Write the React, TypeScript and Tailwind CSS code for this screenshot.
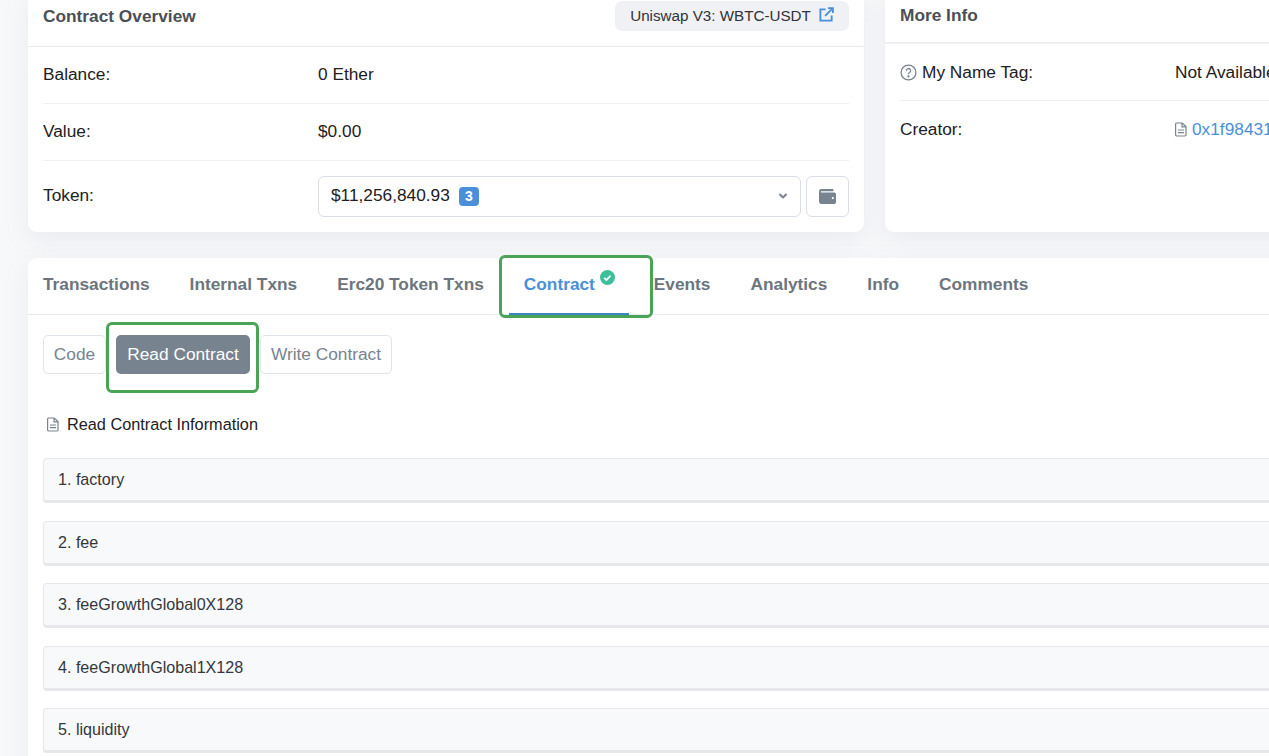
import { ChevronDown } from "lucide-react";

const tabs = ["Transactions", "Internal Txns", "Erc20 Token Txns"];
const tabsAfter = ["Events", "Analytics", "Info", "Comments"];
const methods = ["1. factory", "2. fee", "3. feeGrowthGlobal0X128", "4. feeGrowthGlobal1X128", "5. liquidity"];

function FileIcon({ className }: { className: string }) {
  return (
    <svg viewBox="0 0 12 15" fill="none" stroke="currentColor" strokeWidth="1.2" className={className}>
      <path d="M1.6 1h5.6L11 4.6v8.2a1.2 1.2 0 0 1-1.2 1.2H1.6a1.2 1.2 0 0 1-1-1.2V2.2A1.2 1.2 0 0 1 1.6 1z" />
      <path d="M7 1v3.8h4M3 8h6M3 10.6h6" />
    </svg>
  );
}

export default function App() {
  return (
    <div className="relative h-[756px] w-[1269px] overflow-hidden bg-[#f7f8fa] font-['Liberation_Sans',sans-serif] text-[17.3px] text-[#1e2022]">
      <div className="flex gap-[21px] pl-[28px]">
        <section className="-mt-[10px] h-[242px] w-[836px] shrink-0 rounded-[9px] bg-white px-[15px] shadow-[0_8px_24px_rgba(140,152,164,0.13)]">
          <div className="-mx-[15px] flex h-[57px] items-center justify-between border-b border-[#e7eaf3] px-[15px] pb-[2px]">
            <h2 className="font-bold text-[#4a4f55]">Contract Overview</h2>
            <div className="-mt-[2px] flex h-[30px] w-[234px] items-center justify-center gap-[8px] rounded-[7px] bg-[#eff1f4] text-[15.2px] text-[#2f3338]">
              Uniswap V3: WBTC-USDT
              <svg viewBox="0 0 16 16" fill="none" stroke="#4a90d9" strokeWidth="2" className="-mt-[3px] size-[15px]">
                <path d="M7 2.5H1.5v12h12V9" />
                <path d="M6.5 9.5L14 2M9.5 1.2h5.3v5.3" />
              </svg>
            </div>
          </div>
          <div className="flex h-[57px] items-center border-b border-[#eef0f5]">
            <span className="w-[275px]">Balance:</span>
            <span>0 Ether</span>
          </div>
          <div className="flex h-[57px] items-center border-b border-[#eef0f5]">
            <span className="w-[275px]">Value:</span>
            <span>$0.00</span>
          </div>
          <div className="flex h-[71px] items-center pb-[1px]">
            <span className="w-[275px]">Token:</span>
            <div className="flex h-[41px] w-[483px] items-center rounded-[6px] border border-[#d9dde8] pl-[12px] pr-[10px]">
              <span className="-mt-[1px]">$11,256,840.93</span>
              <span className="ml-[9px] flex h-[19px] w-[20px] items-center justify-center rounded-[4px] bg-[#4a90d9] text-[14px] font-bold text-white">3</span>
              <ChevronDown className="ml-auto mr-[1px] size-[12px] text-[#77838f]" strokeWidth={4} />
            </div>
            <div className="ml-[5px] flex h-[41px] w-[43px] items-center justify-center rounded-[6px] border border-[#d9dde8]">
              <svg viewBox="0 0 16 14" className="h-[15px] w-[17px] fill-[#77838f]">
                <path d="M2 0h11.5v2H2.2a.6.6 0 0 0 0 1.2H14.5A1.5 1.5 0 0 1 16 4.7v7.8a1.5 1.5 0 0 1-1.5 1.5H2a2 2 0 0 1-2-2V2a2 2 0 0 1 2-2z" />
                <circle cx="13" cy="8.5" r="1" fill="#fff" />
              </svg>
            </div>
          </div>
        </section>

        <section className="-mt-[10px] h-[242px] w-[420px] shrink-0 rounded-[9px] bg-white px-[15px] shadow-[0_8px_24px_rgba(140,152,164,0.13)]">
          <div className="-mx-[15px] flex h-[54px] items-center border-b-2 border-[#eff0f6] px-[15px]">
            <h2 className="font-bold text-[#4a4f55]">More Info</h2>
          </div>
          <div className="flex h-[57px] items-center border-b border-[#eef0f5] pt-[2px]">
            <span className="flex w-[275px] shrink-0 items-center gap-[5px]">
              <svg viewBox="0 0 16 16" fill="none" stroke="#77838f" strokeWidth="1.2" className="-mt-[2px] size-[17px]">
                <circle cx="8" cy="8" r="7" />
                <path d="M6 6.3a2 2 0 1 1 3 1.7c-.7.4-1 .8-1 1.6" />
                <circle cx="8" cy="11.6" r=".5" fill="#77838f" />
              </svg>
              My Name Tag:
            </span>
            <span className="whitespace-nowrap">Not Available</span>
          </div>
          <div className="flex h-[57px] items-center">
            <span className="w-[275px] shrink-0">Creator:</span>
            <span className="flex items-center gap-[5px] whitespace-nowrap text-[#4a90d9]">
              <FileIcon className="h-[15px] w-[12px] shrink-0 text-[#77838f]" />
              0x1f98431
            </span>
          </div>
        </section>
      </div>

      <section className="ml-[28px] mt-[26px] h-[520px] w-[1270px] rounded-[9px] bg-white shadow-[0_8px_24px_rgba(140,152,164,0.13)]">
        <div className="flex h-[57px] items-center border-b border-[#e7eaf3] pl-[15px] font-bold text-[#6c757e]">
          {tabs.map((t) => (
            <span key={t} className="mr-[40px] pb-[2px]">{t}</span>
          ))}
          <span className="relative -ml-[15px] mr-[25px] flex h-[57px] w-[120px] items-center border-b-2 border-[#3d86c6] pb-[1px] pl-[15px] text-[#4a90d9]">
            Contract
            <svg viewBox="0 0 16 16" className="absolute left-[91px] top-[12px] size-[15px]">
              <circle cx="8" cy="8" r="8" fill="#3ebf9b" />
              <path d="M4.5 8.3l2.4 2.3 4.4-4.6" fill="none" stroke="#fff" strokeWidth="1.8" />
            </svg>
          </span>
          {tabsAfter.map((t) => (
            <span key={t} className="mr-[40px] pb-[2px]">{t}</span>
          ))}
        </div>

        <div className="px-[15px]">
          <div className="flex gap-[10px] pt-[20px]">
            <span className="flex h-[39px] w-[63px] items-center justify-center rounded-[5px] border border-[#e1e4ec] text-[#77838f]">Code</span>
            <span className="flex h-[39px] w-[134px] items-center justify-center rounded-[5px] bg-[#77838f] text-white">Read Contract</span>
            <span className="flex h-[39px] w-[132px] items-center justify-center rounded-[5px] border border-[#e1e4ec] text-[#77838f]">Write Contract</span>
          </div>
          <div className="mt-[38px] flex items-center gap-[8px] pl-[4px] text-[16.3px]">
            <FileIcon className="h-[15px] w-[12px] text-[#77838f]" />
            Read Contract Information
          </div>
          <div className="mt-[22px] flex flex-col gap-[17.5px]">
            {methods.map((m) => (
              <div key={m} className="flex h-[45px] items-center rounded-[4px] border border-b-[3px] border-[#e6e7ea] bg-[#f8f9fa] pb-[1px] pl-[14px] text-[16.1px] text-[#33373b]">
                {m}
              </div>
            ))}
          </div>
        </div>
      </section>

      {/* green annotation boxes drawn over the page */}
      <div className="absolute left-[499px] top-[255px] h-[63px] w-[154px] rounded-[6px] border-[3px] border-[#4aa457]" />
      <div className="absolute left-[106px] top-[322px] h-[71px] w-[153px] rounded-[6px] border-[3px] border-[#4aa457]" />
    </div>
  );
}
